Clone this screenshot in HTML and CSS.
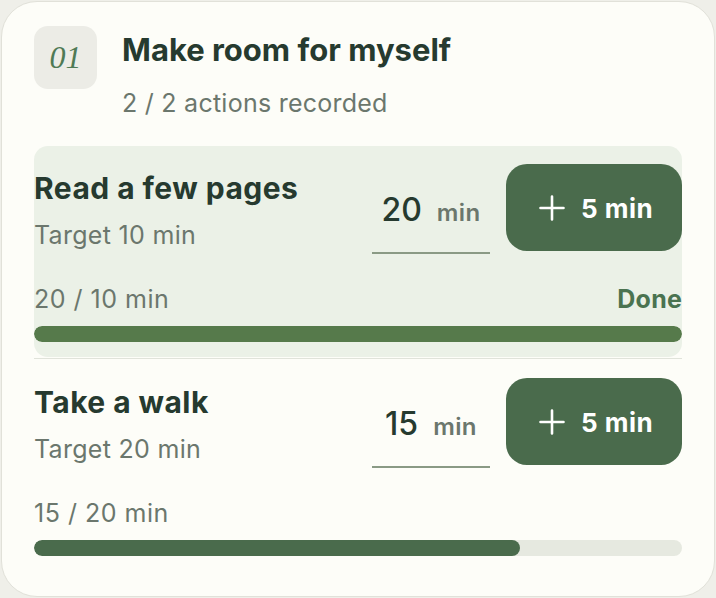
FILE: index.html
```html
<!DOCTYPE html>
<html lang="en">
<head>
<meta charset="utf-8">
<title>Make room for myself</title>
<link rel="stylesheet" href="styles.css">
</head>
<body>
<div class="card">
  <header class="head">
    <div class="badge">01</div>
    <div class="head-text">
      <h1 class="title">Make room for myself</h1>
      <p class="subtitle">2 / 2 actions recorded</p>
    </div>
  </header>

  <section class="item item-done">
    <div class="item-top">
      <div class="item-info">
        <h2 class="item-title">Read a few pages</h2>
        <p class="item-target">Target 10 min</p>
      </div>
      <div class="entry"><span class="entry-val">20</span><span class="entry-unit">min</span></div>
      <button class="add" type="button">
        <svg class="plus" viewBox="0 0 26 26" width="26" height="26" aria-hidden="true"><path d="M13 1.5v23M1.5 13h23" stroke="#fff" stroke-width="2.6" stroke-linecap="round" fill="none"/></svg>
        <span>5 min</span>
      </button>
    </div>
    <div class="progress-row"><span class="progress-text">20 / 10 min</span><span class="done-label">Done</span></div>
    <div class="track"><div class="fill fill-done" style="width:100%"></div></div>
  </section>

  <div class="divider"></div>

  <section class="item">
    <div class="item-top">
      <div class="item-info">
        <h2 class="item-title">Take a walk</h2>
        <p class="item-target">Target 20 min</p>
      </div>
      <div class="entry"><span class="entry-val">15</span><span class="entry-unit">min</span></div>
      <button class="add" type="button">
        <svg class="plus" viewBox="0 0 26 26" width="26" height="26" aria-hidden="true"><path d="M13 1.5v23M1.5 13h23" stroke="#fff" stroke-width="2.6" stroke-linecap="round" fill="none"/></svg>
        <span>5 min</span>
      </button>
    </div>
    <div class="progress-row"><span class="progress-text">15 / 20 min</span></div>
    <div class="track"><div class="fill" style="width:75%"></div></div>
  </section>
</div>
</body>
</html>
```

FILE: styles.css
```css
* { box-sizing: border-box; }
html, body { margin: 0; padding: 0; }
body {
  background: #efefe9;
  font-family: Inter, "Noto Sans", sans-serif;
  width: 716px;
  height: 598px;
  overflow: hidden;
}
.card {
  margin: 1px;
  width: 714px;
  height: 596px;
  background: #fdfdf8;
  border: 1px solid #e1e1d9;
  border-radius: 36px;
  padding: 24px 32px;
}
.head {
  display: flex;
  align-items: flex-start;
  gap: 25px;
  margin-bottom: 28px;
}
.badge {
  width: 63px;
  height: 63px;
  flex: none;
  border-radius: 14px;
  background: #ecece6;
  color: #4f7a55;
  font-family: "Liberation Serif", "DejaVu Serif", serif;
  font-style: italic;
  font-size: 32px;
  display: flex;
  align-items: center;
  justify-content: center;
}
.head-text { margin-top: 5px; }
.title {
  margin: 0;
  font-size: 31px;
  line-height: 38px;
  font-weight: 700;
  color: #263a2f;
  letter-spacing: 0;
}
.subtitle {
  margin: 19px 0 0;
  font-size: 25px;
  line-height: 30px;
  color: #6b776d;
  letter-spacing: 0.25px;
}
.item {
  padding: 18px 0 15px;
  border-radius: 14px;
}
.item-done { background: #ebf1e7; }
.divider {
  height: 1px;
  background: #e0e3da;
  margin: 1px 0 1px;
}
.item-top {
  display: flex;
  align-items: center;
}
.item-info { flex: 1; margin-top: 2px; }
.item-title {
  margin: 0;
  font-size: 30px;
  line-height: 36px;
  font-weight: 700;
  color: #263a2f;
  letter-spacing: 0.45px;
}
.item-target {
  margin: 14px 0 0;
  font-size: 25px;
  line-height: 30px;
  color: #6b776d;
  letter-spacing: 0.3px;
}
.entry {
  width: 118px;
  height: 90px;
  margin-right: 16px;
  align-self: flex-start;
  border-bottom: 2px solid #8a9a85;
  display: flex;
  align-items: baseline;
  justify-content: center;
  gap: 15px;
  padding-top: 28px;
}
.entry-val {
  font-size: 32px;
  line-height: 36px;
  font-weight: 500;
  color: #263a2f;
}
.entry-unit {
  font-size: 24px;
  font-weight: 600;
  color: #6b776d;
  letter-spacing: 0.4px;
}
.add {
  width: 176px;
  height: 87px;
  align-self: flex-start;
  border: 0;
  border-radius: 21px;
  background: #4a6b4c;
  color: #fff;
  font-family: inherit;
  font-size: 26px;
  font-weight: 700;
  letter-spacing: 0.5px;
  display: flex;
  align-items: center;
  justify-content: center;
  gap: 16px;
  padding: 2px 0 0 4px;
}
.plus { display: block; margin-top: -2px; }
.progress-row {
  display: flex;
  justify-content: space-between;
  margin-top: 30px;
  font-size: 25px;
  line-height: 30px;
}
.progress-text { color: #6b776d; letter-spacing: 0.5px; }
.done-label { color: #4a7350; font-weight: 700; letter-spacing: 0.2px; }
.track {
  margin-top: 12px;
  height: 16px;
  border-radius: 8px;
  background: #e6e9e0;
  overflow: hidden;
}
.fill {
  height: 100%;
  border-radius: 8px;
  background: #4a6b4c;
}
.fill-done { background: #567a4b; }
```
